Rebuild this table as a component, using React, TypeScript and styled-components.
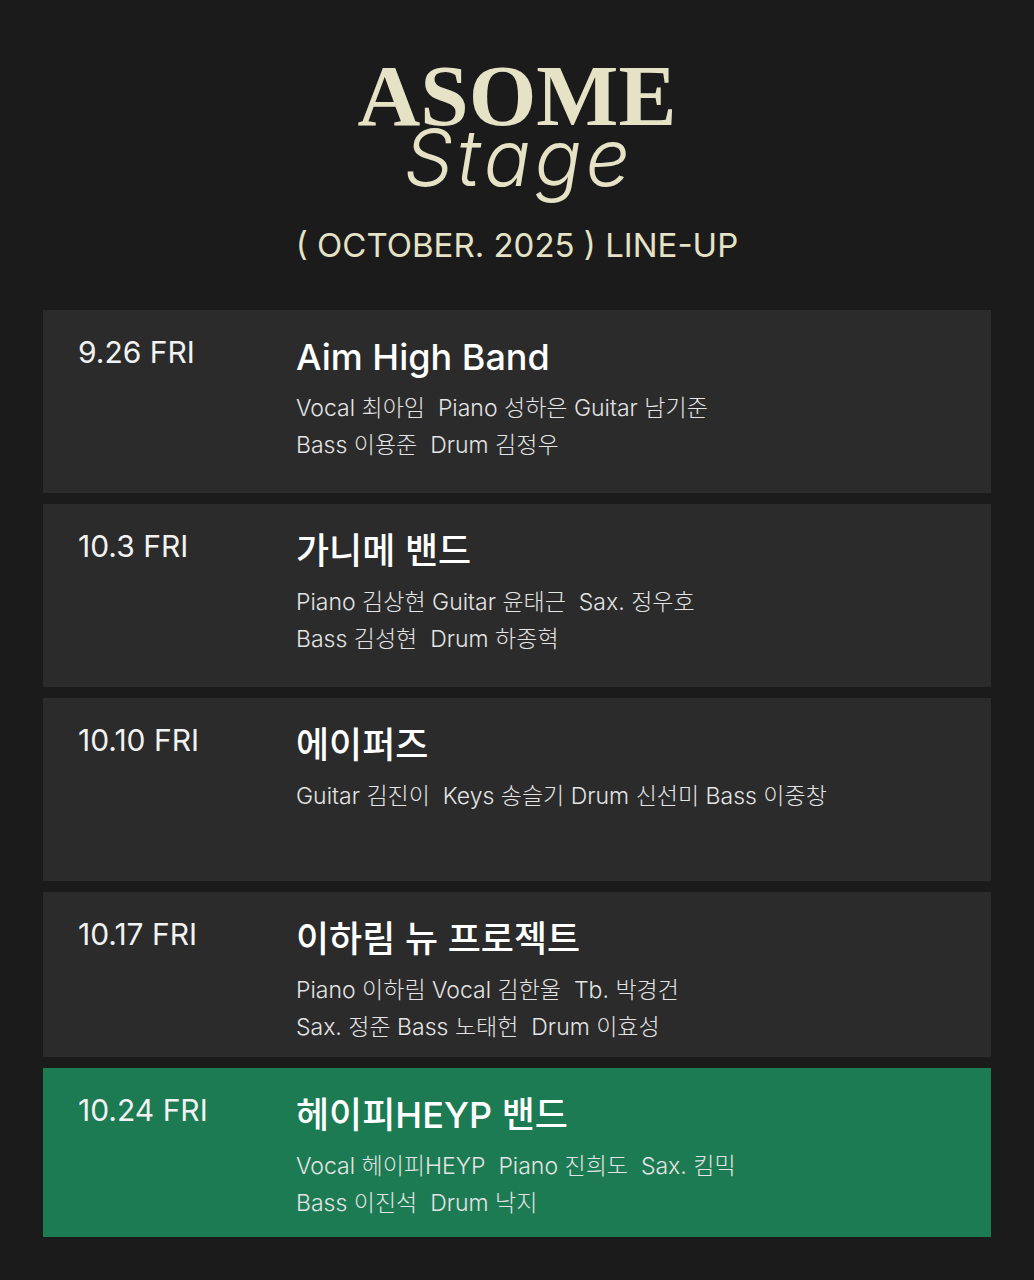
import React from 'react';
import styled, { createGlobalStyle } from 'styled-components';

const GlobalStyle = createGlobalStyle`
    body {
        margin: 0;
        background-color: #1b1b1b;
        font-family: Inter, "Noto Sans CJK KR", sans-serif;
    }
`;

const Page = styled.div`
    width: 1034px;
    height: 1280px;
    background-color: #1b1b1b;
    display: flex;
    flex-direction: column;
    align-items: center;
    padding-top: 65px;
    box-sizing: border-box;
`;

const Logo = styled.div`
    font-family: "Liberation Serif", serif;
    font-weight: 700;
    font-size: 87px;
    line-height: 62px;
    color: #e5e2c6;
`;

const LogoSub = styled.div`
    font-family: Inter, sans-serif;
    font-style: italic;
    font-weight: 300;
    font-size: 78px;
    line-height: 62px;
    letter-spacing: 4px;
    padding-left: 4px;
    color: #e5e2c6;
`;

const Subtitle = styled.div`
    margin-top: 36px;
    font-family: Inter, sans-serif;
    font-size: 33px;
    line-height: 40px;
    letter-spacing: 0;
    color: #e5e2c6;
    white-space: pre;
`;

const List = styled.div`
    margin-top: 45px;
    width: 948px;
    display: flex;
    flex-direction: column;
    gap: 11px;
`;

const Card = styled.div<{ $h: number; $active?: boolean }>`
    height: ${p => p.$h}px;
    background-color: ${p => (p.$active ? '#1c7b53' : '#2b2b2b')};
    display: grid;
    grid-template-columns: 218px 1fr;
    padding: 24px 0 0 35px;
    box-sizing: border-box;
`;

const DateText = styled.div`
    font-size: 30px;
    line-height: 36px;
    color: #f2f2f2;
`;

const Info = styled.div`
    display: flex;
    flex-direction: column;
`;

const BandName = styled.div`
    margin-top: 1px;
    font-size: 36px;
    font-weight: 500;
    line-height: 44px;
    color: #ffffff;
`;

const Members = styled.div`
    margin-top: 11px;
    font-size: 23px;
    font-weight: 300;
    line-height: 37px;
    color: #e4e4e4;
    white-space: pre;
`;

const shows = [
    { date: '9.26 FRI', name: 'Aim High Band', h: 183, lines: ['Vocal 최아임  Piano 성하은 Guitar 남기준', 'Bass 이용준  Drum 김정우'] },
    { date: '10.3 FRI', name: '가니메 밴드', h: 183, lines: ['Piano 김상현 Guitar 윤태근  Sax. 정우호', 'Bass 김성현  Drum 하종혁'] },
    { date: '10.10 FRI', name: '에이퍼즈', h: 183, lines: ['Guitar 김진이  Keys 송슬기 Drum 신선미 Bass 이중창'] },
    { date: '10.17 FRI', name: '이하림 뉴 프로젝트', h: 165, lines: ['Piano 이하림 Vocal 김한울  Tb. 박경건', 'Sax. 정준 Bass 노태헌  Drum 이효성'] },
    { date: '10.24 FRI', name: '헤이피HEYP 밴드', h: 169, active: true, lines: ['Vocal 헤이피HEYP  Piano 진희도  Sax. 킴믹', 'Bass 이진석  Drum 낙지'] },
];

const App = () => {
    return (
        <Page>
            <GlobalStyle />
            <Logo>ASOME</Logo>
            <LogoSub>Stage</LogoSub>
            <Subtitle>( OCTOBER. 2025 ) LINE-UP</Subtitle>
            <List>
                {shows.map(s => (
                    <Card key={s.date} $h={s.h} $active={s.active}>
                        <DateText>{s.date}</DateText>
                        <Info>
                            <BandName>{s.name}</BandName>
                            <Members>{s.lines.join('\n')}</Members>
                        </Info>
                    </Card>
                ))}
            </List>
        </Page>
    );
};

export default App;
